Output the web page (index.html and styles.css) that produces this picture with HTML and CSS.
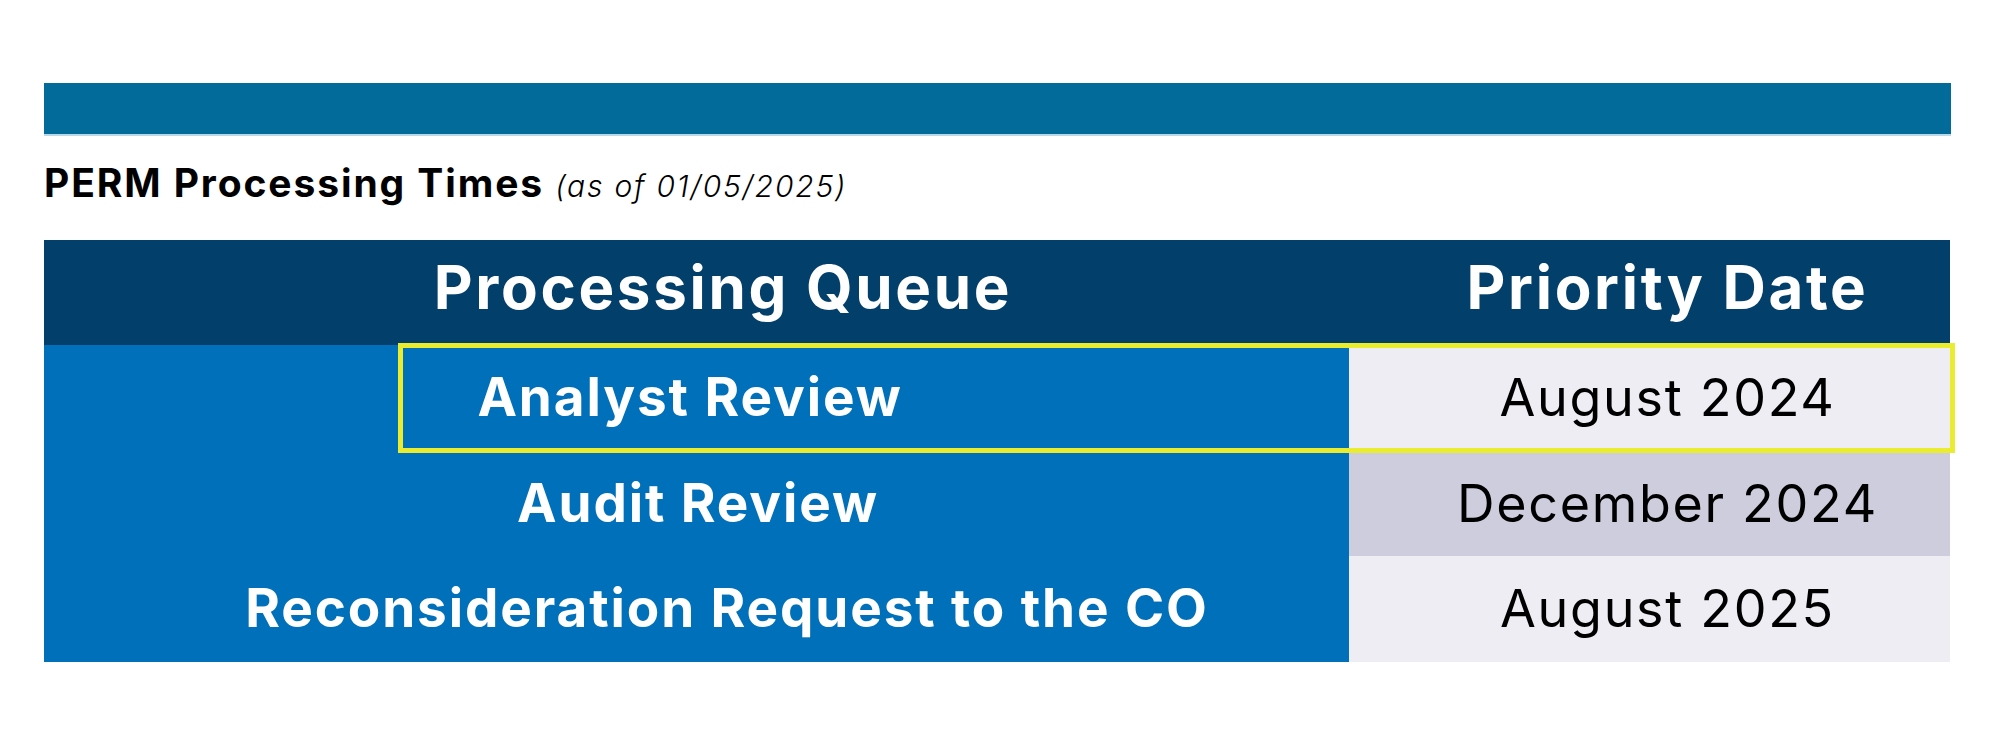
FILE: index.html
```html
<!DOCTYPE html>
<html lang="en">
<head>
<meta charset="utf-8">
<title>PERM Processing Times</title>
<link rel="stylesheet" href="styles.css">
</head>
<body>
<div class="page">
  <div class="topbar"></div>
  <h2 class="title">PERM Processing Times <span class="asof">(as of 01/05/2025)</span></h2>
  <div class="table">
    <div class="cell head queue q-head">Processing Queue</div>
    <div class="cell head date">Priority Date</div>
    <div class="cell queue body q-analyst">Analyst Review</div>
    <div class="cell date light">August 2024</div>
    <div class="cell queue body q-audit">Audit Review</div>
    <div class="cell date dark">December 2024</div>
    <div class="cell queue body q-recon">Reconsideration Request to the CO</div>
    <div class="cell date light">August 2025</div>
    <div class="highlight"></div>
  </div>
</div>
</body>
</html>
```

FILE: styles.css
```css
* { box-sizing: border-box; }
html, body { margin: 0; padding: 0; background: #ffffff; }
body { font-family: Inter, "Open Sans", sans-serif; }
.page { padding: 83px 49px 0 44px; width: 2000px; }
.topbar {
  height: 53px;
  background: #036b9a;
  border-bottom: 2px solid #b9d9ea;
}
.title {
  margin: 0;
  height: 104px;
  padding-top: 25px;
  font-size: 39px;
  font-weight: 700;
  letter-spacing: 1.9px;
  color: #000;
  line-height: 44px;
  white-space: nowrap;
}
.asof {
  font-weight: 300;
  font-style: italic;
  font-size: 30px;
  letter-spacing: 1.8px;
}
.table {
  position: relative;
  display: grid;
  grid-template-columns: 1305px 601px;
  grid-template-rows: 105px 107px 104px 106px;
}
.cell {
  display: flex;
  align-items: center;
  justify-content: center;
  white-space: nowrap;
}
.head {
  background: #033f6b;
  color: #fff;
  font-weight: 700;
  font-size: 60px;
  letter-spacing: 2.7px;
  padding-bottom: 12px;
}
.date { padding-left: 36px; }
.q-head { padding-left: 53px; }
.q-analyst { padding-right: 13px; }
.q-audit { padding-left: 3px; }
.q-recon { padding-left: 61px; }
.body {
  background: #0070bb;
  color: #fff;
  font-weight: 700;
  font-size: 53px;
  letter-spacing: 1.9px;
  padding-bottom: 3px;
}
.light, .dark {
  color: #000;
  font-weight: 400;
  font-size: 52px;
  letter-spacing: 1.7px;
  padding-bottom: 2px;
}
.light { background: #eeedf3; }
.dark { background: #cdcddd; }
.highlight {
  position: absolute;
  left: 354px;
  top: 103px;
  width: 1557px;
  height: 110px;
  border: 5px solid #e9ec2f;
}
```
